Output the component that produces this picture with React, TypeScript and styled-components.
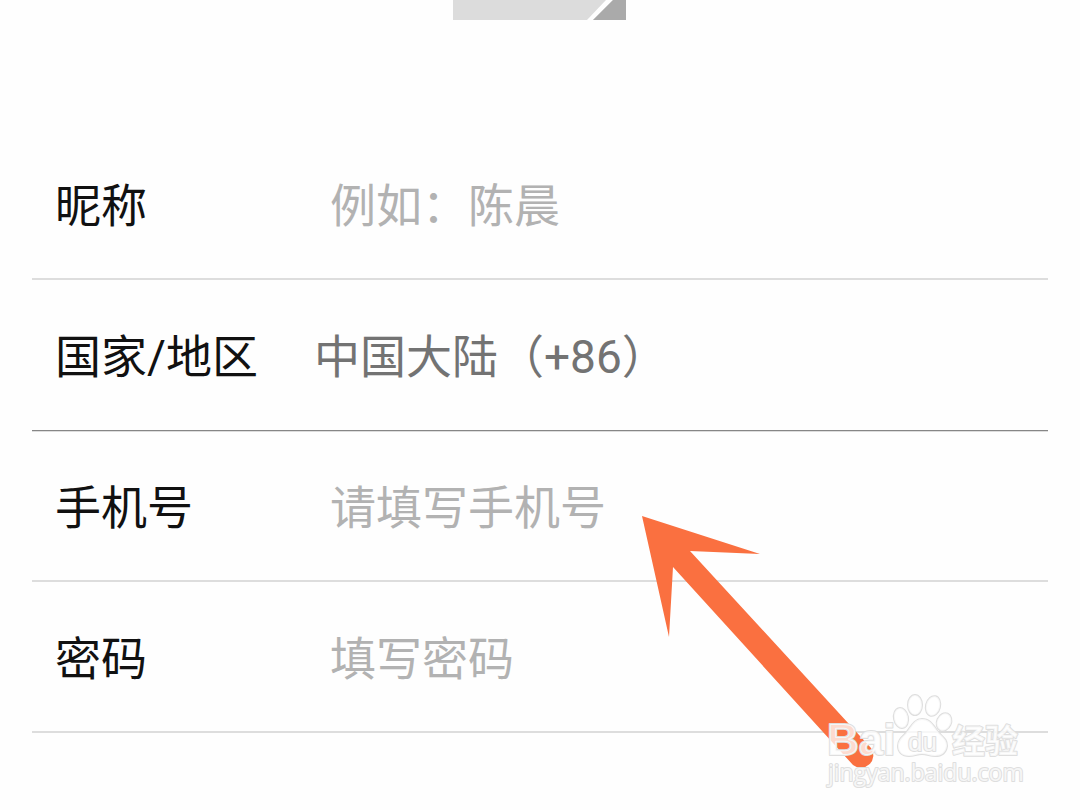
import React from "react";
import styled, { createGlobalStyle, css } from "styled-components";

const GlobalStyle = createGlobalStyle`
  * { box-sizing: border-box; }
  body {
    margin: 0;
    background: #fefefe;
    font-family: Roboto, "Noto Sans CJK SC", sans-serif;
  }
`;

const Page = styled.main`
  position: relative;
  min-height: 100vh;
  overflow: hidden;
`;

const AvatarArea = styled.header`
  display: flex;
  justify-content: center;
  height: 129px;
`;

const Avatar = styled.svg`
  display: block;
  width: 174px;
  height: 20px;
`;

const Form = styled.form`
  padding: 0 32px;
`;

const Row = styled.div<{ $strong?: boolean }>`
  display: flex;
  align-items: center;
  height: 151px;
  padding: 4px 23px 0;
  border-bottom: ${(p) => (p.$strong ? "1px solid #868686" : "2px solid #dddddd")};
  box-shadow: ${(p) => (p.$strong ? "0 1px #dddddd" : "none")};
`;

const Label = styled.label`
  flex: none;
  width: 275px;
  font-size: 46px;
  line-height: 68px;
  color: #111111;
`;

const control = css`
  flex: 1;
  min-width: 0;
  height: 68px;
  padding: 0;
  border: 0;
  outline: 0;
  background: transparent;
  font-family: inherit;
  font-size: 46px;
  line-height: 68px;
`;

const Input = styled.input`
  ${control}
  color: #111111;
  &::placeholder {
    color: #b2b2b2;
    opacity: 1;
  }
`;

const Select = styled.select`
  ${control}
  appearance: none;
  margin-left: -16px;
  color: #737373;
`;

const Arrow = styled.svg`
  position: absolute;
  top: 510px;
  left: 636px;
  width: 244px;
  height: 264px;
  pointer-events: none;
`;

const Watermark = styled.div`
  position: absolute;
  top: 690px;
  left: 824px;
  width: 204px;
  pointer-events: none;
`;

const Logo = styled.svg`
  display: block;
  width: 204px;
  height: 102px;
  paint-order: stroke;
  fill: #ffffff;
  fill-opacity: 0.75;
  stroke: #dedede;
  stroke-width: 2px;
  stroke-linejoin: round;
`;

export default function App() {
  return (
    <Page>
      <GlobalStyle />
      <AvatarArea>
        <Avatar viewBox="0 0 174 20" role="img" aria-label="头像">
          <path d="M0 0H173V20H0Z" fill="#dcdcdc" />
          <path d="M153 0H160L140 20H134Z" fill="#ffffff" />
          <path d="M160 0H173V20H140Z" fill="#aaaaaa" />
        </Avatar>
      </AvatarArea>
      <Form>
        <Row>
          <Label htmlFor="nickname">昵称</Label>
          <Input id="nickname" type="text" placeholder="例如：陈晨" />
        </Row>
        <Row $strong>
          <Label htmlFor="region">国家/地区</Label>
          <Select id="region" defaultValue="86">
            <option value="86">中国大陆（+86）</option>
          </Select>
        </Row>
        <Row>
          <Label htmlFor="phone">手机号</Label>
          <Input id="phone" type="tel" placeholder="请填写手机号" />
        </Row>
        <Row>
          <Label htmlFor="password">密码</Label>
          <Input id="password" type="password" placeholder="填写密码" />
        </Row>
      </Form>
      <Arrow viewBox="636 510 244 264" aria-hidden="true">
        <path
          d="M642 516L760 554L690 551L871 748A12.5 12.5 0 0 1 853 765L673 567L669 637Z"
          fill="#fa7040"
        />
      </Arrow>
      <Watermark>
        <Logo viewBox="824 690 204 102">
          <text x="827" y="755" fontFamily="Liberation Sans" fontWeight="700" fontSize="44">
            Bai
          </text>
          <ellipse cx="901" cy="718" rx="7" ry="10" transform="rotate(-12 901 718)" />
          <ellipse cx="915" cy="705" rx="7" ry="10" />
          <ellipse cx="933" cy="706" rx="7" ry="10" transform="rotate(14 933 706)" />
          <ellipse cx="944" cy="722" rx="7" ry="9" transform="rotate(24 944 722)" />
          <path d="M922 719C931 719 934 727 939 733C944 738 947 740 947 746C946 753 941 756 935 756C930 756 927 754 922 754C917 754 914 756 909 756C902 756 898 752 898 746C898 740 902 737 906 733C911 727 914 719 922 719Z" />
          <text x="908" y="751" fontFamily="Liberation Sans" fontSize="26">
            du
          </text>
          <text x="952" y="753" fontFamily="Noto Sans CJK SC" fontWeight="700" fontSize="33">
            经验
          </text>
          <text x="828" y="781" fontFamily="Open Sans" fontSize="23">
            jingyan.baidu.com
          </text>
        </Logo>
      </Watermark>
    </Page>
  );
}
